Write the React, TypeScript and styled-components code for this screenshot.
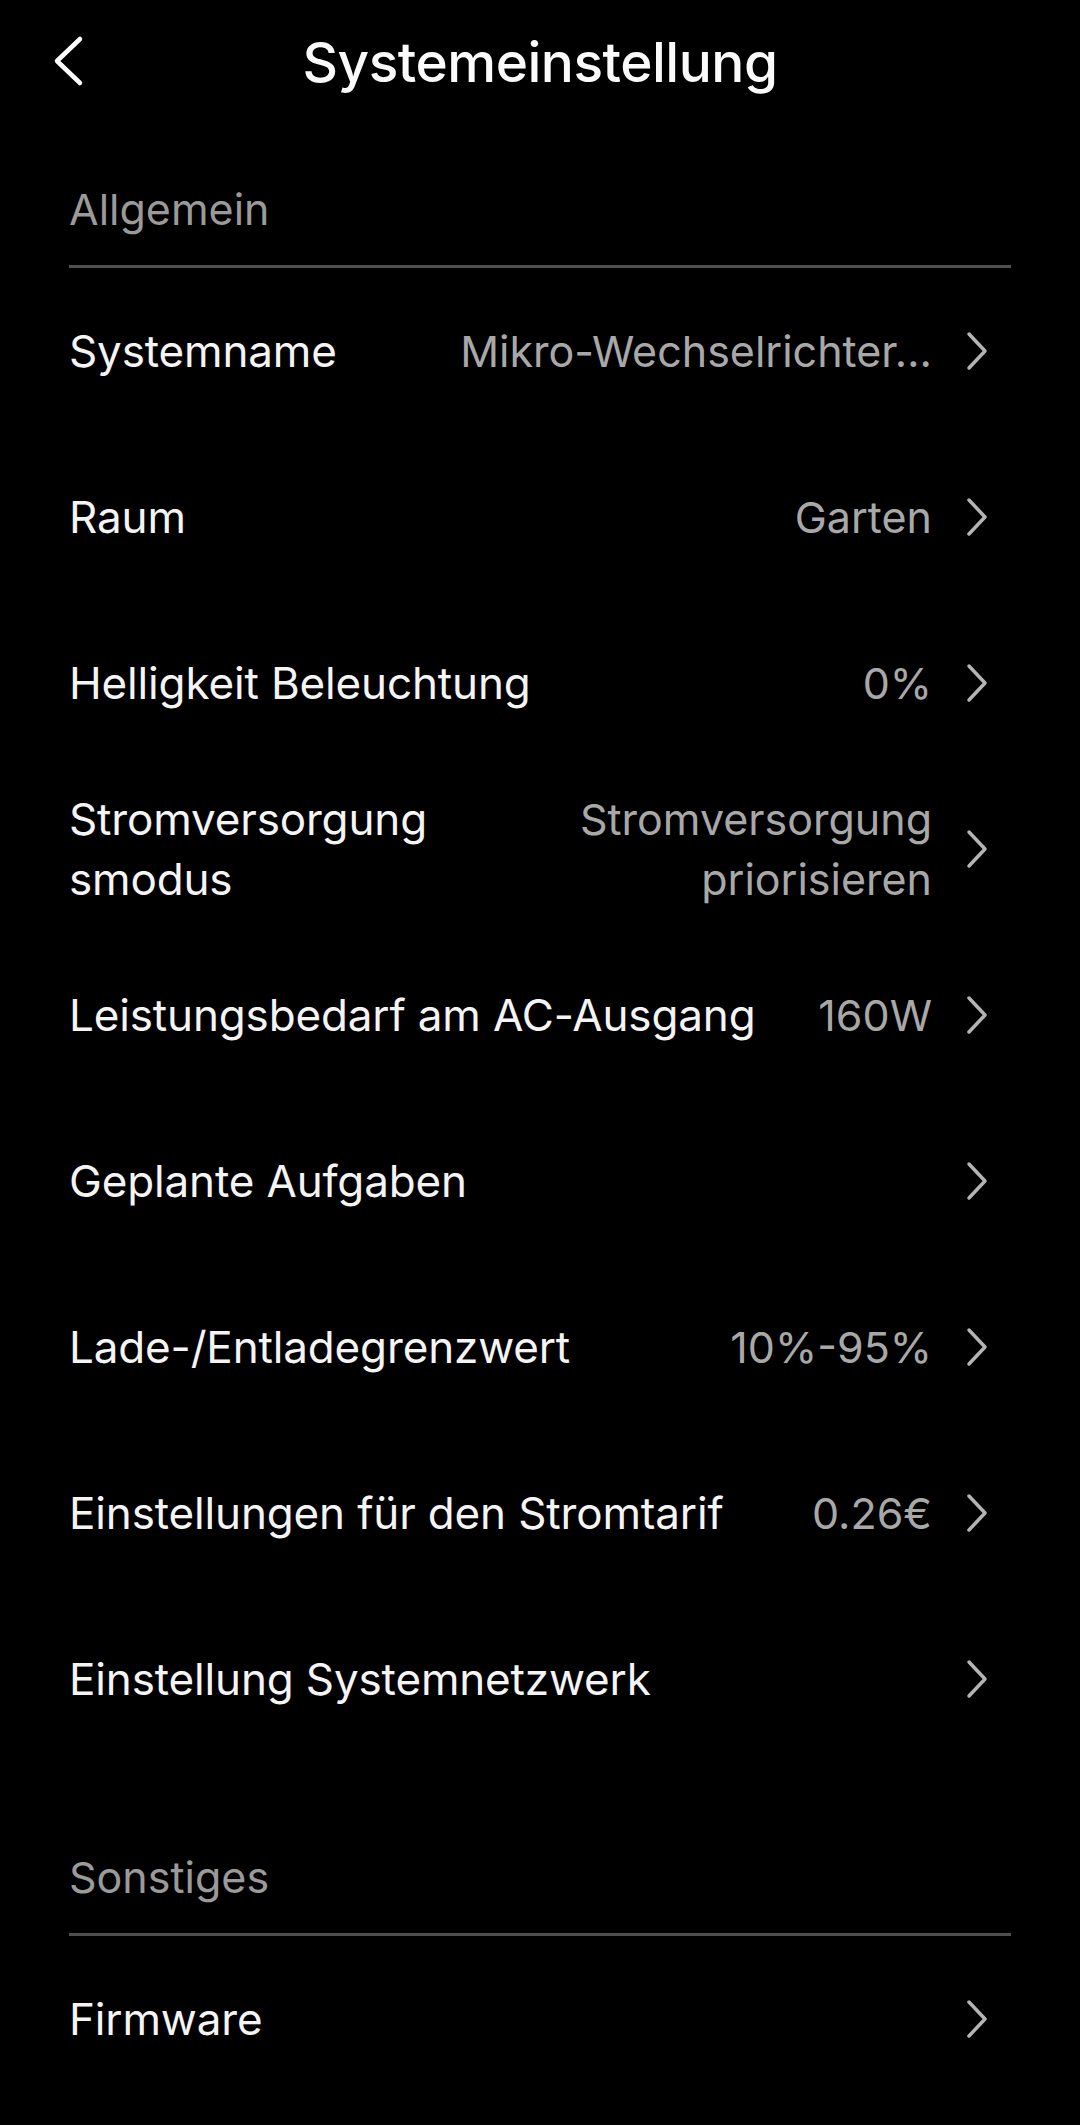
import React from 'react';
import styled, { createGlobalStyle } from 'styled-components';

const GlobalStyle = createGlobalStyle`
  html, body {
    margin: 0;
    padding: 0;
    background: #000;
  }
  body {
    font-family: Inter, "Noto Sans", "Liberation Sans", sans-serif;
    -webkit-font-smoothing: antialiased;
  }
`;

const Screen = styled.div`
  width: 1080px;
  min-height: 2125px;
  background: #000;
  color: #f2f2f2;
`;

const Header = styled.div`
  position: relative;
  height: 124px;
  display: flex;
  align-items: center;
  justify-content: center;
`;

const BackButton = styled.button`
  position: absolute;
  left: 40px;
  top: 30px;
  width: 56px;
  height: 62px;
  background: none;
  border: none;
  padding: 0;
  display: flex;
  align-items: center;
  justify-content: center;
  cursor: pointer;
`;

const Title = styled.h1`
  margin: 0;
  font-size: 55px;
  font-weight: 500;
  color: #fafafa;
  letter-spacing: -0.5px;
`;

const Content = styled.div`
  padding: 0 69px;
`;

const SectionHead = styled.div<{ $top: number }>`
  padding-top: ${p => p.$top}px;
  padding-bottom: 26px;
  border-bottom: 3px solid #4f4f4f;
  font-size: 43px;
  line-height: 60px;
  color: #9a9a9a;
  font-weight: 400;
`;

const Row = styled.div`
  height: 166px;
  display: flex;
  align-items: center;
  justify-content: space-between;
  gap: 24px;
`;

const Label = styled.div`
  font-size: 44px;
  line-height: 60px;
  font-weight: 400;
  letter-spacing: -0.15px;
  color: #f4f4f4;
  white-space: nowrap;
`;

const Trail = styled.div`
  display: flex;
  align-items: center;
  gap: 34px;
  padding-right: 23px;
`;

const Value = styled.div`
  font-size: 43px;
  line-height: 60px;
  color: #a8a8a8;
  text-align: right;
  white-space: nowrap;
`;

const Chevron = () => (
  <svg width="22" height="40" viewBox="0 0 22 40" fill="none">
    <path d="M3 3 L19 20 L3 37" stroke="#b4b4b4" strokeWidth="3.5" strokeLinecap="round" strokeLinejoin="round" />
  </svg>
);

const BackIcon = () => (
  <svg width="32" height="52" viewBox="0 0 32 52" fill="none">
    <path d="M28 4 L5 26 L28 48" stroke="#ffffff" strokeWidth="4.5" strokeLinecap="round" strokeLinejoin="round" />
  </svg>
);

type Item = { label: React.ReactNode; value?: React.ReactNode };

const general: Item[] = [
  { label: 'Systemname', value: 'Mikro-Wechselrichter…' },
  { label: 'Raum', value: 'Garten' },
  { label: 'Helligkeit Beleuchtung', value: '0%' },
  {
    label: <>Stromversorgung<br />smodus</>,
    value: <>Stromversorgung<br />priorisieren</>,
  },
  { label: 'Leistungsbedarf am AC-Ausgang', value: '160W' },
  { label: 'Geplante Aufgaben' },
  { label: 'Lade-/Entladegrenzwert', value: '10%-95%' },
  { label: 'Einstellungen für den Stromtarif', value: '0.26€' },
  { label: 'Einstellung Systemnetzwerk' },
];

const other: Item[] = [{ label: 'Firmware' }];

const SettingRow: React.FC<Item> = ({ label, value }) => (
  <Row>
    <Label>{label}</Label>
    <Trail>
      {value && <Value>{value}</Value>}
      <Chevron />
    </Trail>
  </Row>
);

export default function App() {
  return (
    <Screen>
      <GlobalStyle />
      <Header>
        <BackButton aria-label="Zurück">
          <BackIcon />
        </BackButton>
        <Title>Systemeinstellung</Title>
      </Header>
      <Content>
        <SectionHead $top={55}>Allgemein</SectionHead>
        {general.map((it, i) => (
          <SettingRow key={i} {...it} />
        ))}
        <SectionHead $top={85}>Sonstiges</SectionHead>
        {other.map((it, i) => (
          <SettingRow key={i} {...it} />
        ))}
      </Content>
    </Screen>
  );
}
